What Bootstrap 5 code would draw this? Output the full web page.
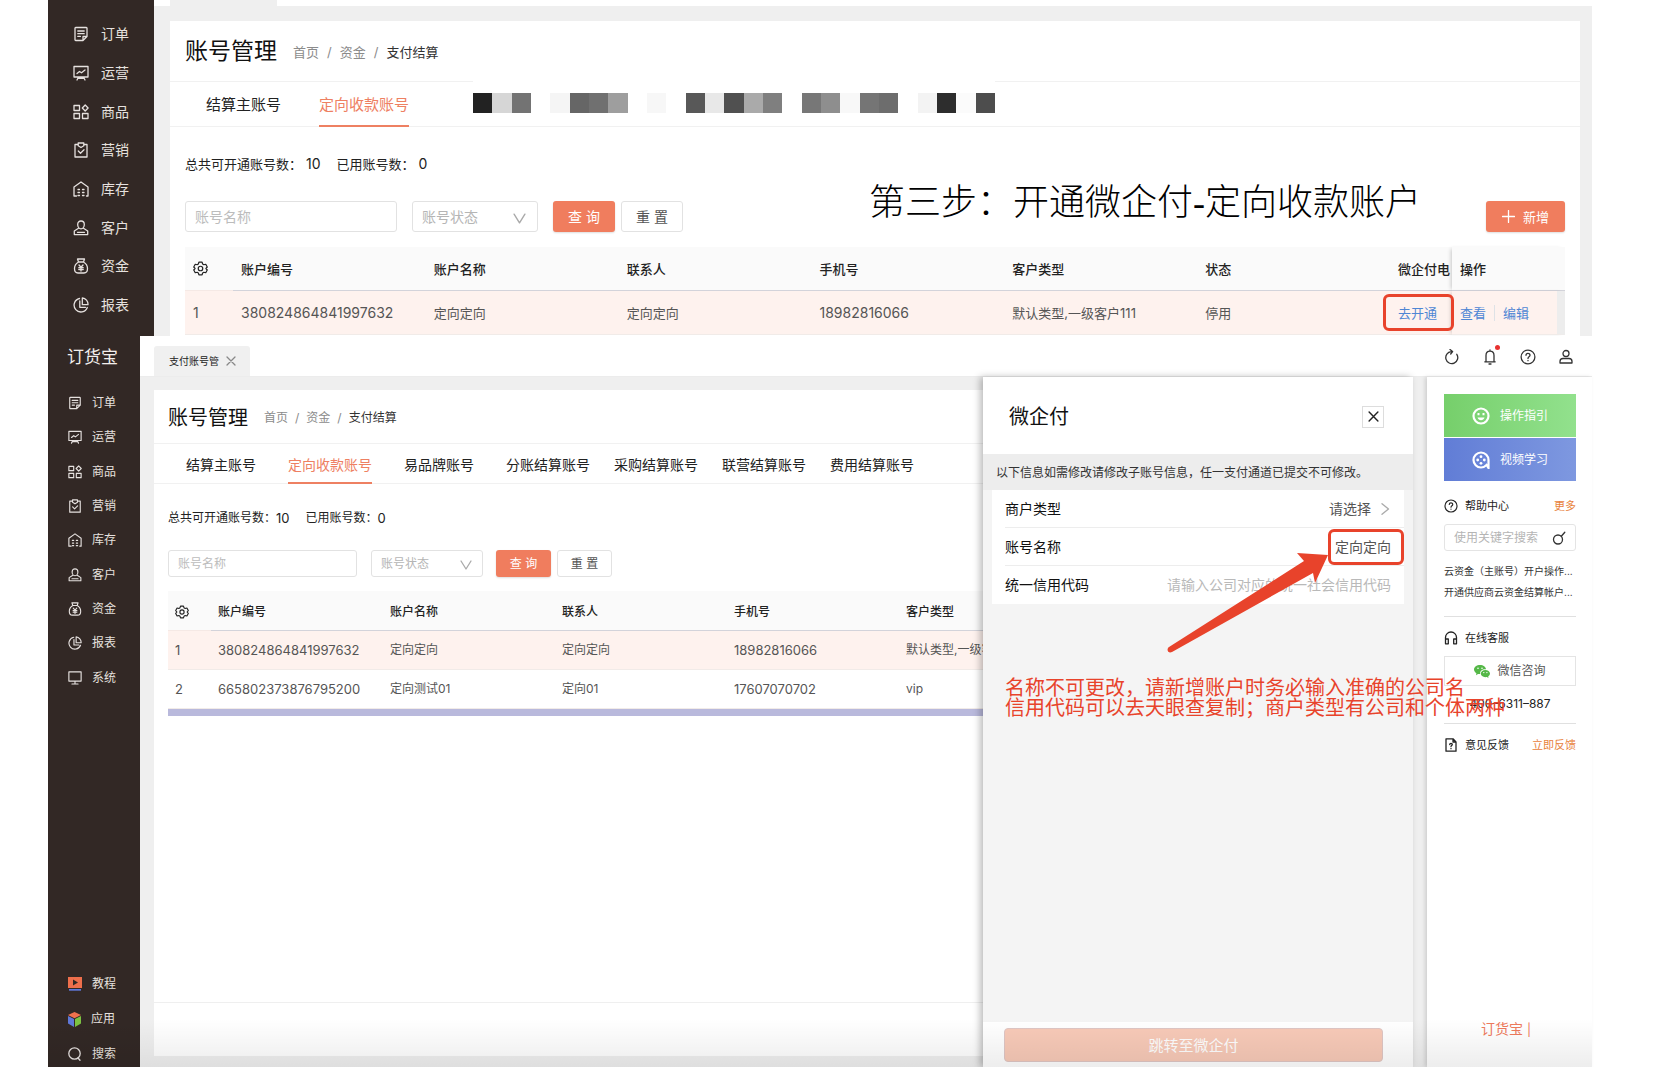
<!DOCTYPE html>
<html lang="zh-CN">
<head>
<meta charset="utf-8">
<meta name="viewport" content="width=device-width, initial-scale=1">
<title>账号管理</title>
<link rel="stylesheet" href="https://cdn.jsdelivr.net/npm/bootstrap@5.3.0/dist/css/bootstrap.min.css">
<style>
body{font-family:Inter,"Noto Sans CJK SC",sans-serif;font-size:12px;line-height:20px;color:#333;background:#fff;overflow:hidden}
a{text-decoration:none}
svg{display:block;flex:none}
.ic{fill:none;stroke:currentColor;stroke-width:1.3;stroke-linecap:round;stroke-linejoin:round}
.doc{padding:0 88px 0 48px;height:100vh}
.shot-a{height:336px;overflow:hidden;font-size:13px}
.shot-b{flex:1 1 0;min-height:0}
.side{background:#322825;flex:none;overflow:hidden}
.shot-a .side{width:106px;padding-top:15px}
.shot-b .side{width:92px}
.side ul{margin:0;padding:0;list-style:none;display:flex;flex-direction:column;flex:none}
.side li{flex:1 1 0;display:flex;align-items:center}
.side a{color:#e6e1df;display:flex;align-items:center}
.shot-a .side ul{height:348px;font-size:14px;padding-left:25px}
.shot-a .side a{gap:12px}
.shot-b .side ul{height:309px;font-size:12px;padding-left:20px}
.shot-b .side a{gap:10px}
.shot-b .side .foot-menu{height:104px;margin:auto 0 -4px}
.brand{height:50px;padding:9px 0 0 19px;font-size:17px;line-height:24px;color:#f2eeec}
.stage{background:#efefef;flex:1 1 0;min-width:0}
.panel{background:#fff;overflow:hidden}
.shot-a .panel{margin:15px 12px 0 16px;height:315px}
.strip{height:6px;background:#fff}
.strip div{width:107px;height:6px;margin-left:16px;background:#efefef}
.head{display:flex;align-items:center;border-bottom:1px solid #f1f1f1;padding-top:2px}
.head h1{margin:0;color:#111;font-weight:400}
.crumbs a,.crumbs i{color:#8b8b8b;font-style:normal}
.shot-a .head{height:61px;padding-left:15px}
.shot-a .head h1{font-size:23px;margin-right:16px}
.shot-a .crumbs{display:flex;gap:8px}
.shot-b .head{height:54px;padding-left:14px}
.shot-b .head h1{font-size:20px;margin-right:16px}
.shot-b .crumbs{display:flex;gap:7px}
.tabbar{display:flex;border-bottom:1px solid #f1f1f1}
.tabbar a{color:#222;white-space:nowrap;display:flex;align-items:center;border-bottom:2px solid transparent;margin-bottom:-1px;padding-top:3px}
.tabbar a.on{color:#ee8062;border-color:#ee8062}
.shot-a .tabbar{height:45px;font-size:15px;padding-left:36px;gap:38px}
.shot-b .tabbar{height:40px;font-size:14px;padding-left:32px;gap:32px}
.shot-b .tabbar .tight{gap:24px}
.mosaic{background:#fff;margin:-4px 0 13px 26px;width:522px;padding:15px 0 0;box-sizing:border-box;display:flex}
.mosaic span{flex:1 1 0;height:20px}
.stats{display:flex;align-items:center;color:#222}
.stats b{font-weight:400}
.shot-a .stats{height:74px;padding-left:15px}
.shot-a .stats b{font-size:14px;margin-left:4px}
.shot-b .stats{height:66px;padding:2px 0 0 14px}
.shot-b .stats b{font-size:13px}
.filters{display:flex}
.filters .form-control,.pick select{font-size:inherit;line-height:20px;border:1px solid #e2e2e2;border-radius:3px;padding:0 9px;color:#333;background:#fff;height:100%}
.filters input::placeholder{color:#bcbcbc}
.pick{position:relative}
.pick select{appearance:none;width:100%;color:#b5b5b5}
.pick svg{position:absolute;top:50%;color:#aaa;margin-top:-4px;pointer-events:none}
.filters .btn,.add{font-size:inherit;line-height:20px;padding:0;border-radius:3px;white-space:pre}
.btn-coral,.btn-coral:hover{background:#f07d5e;color:#fff;border:0;box-shadow:0 1px 2px #0002}
.btn-plain{background:#fff;border:1px solid #e2e2e2;color:#555}
.shot-a .filters{height:31px;margin:0 15px 15px;font-size:14px}
.shot-a .filters .form-control{width:212px;margin-right:15px}
.shot-a .pick{width:126px;margin-right:15px}
.shot-a .pick svg{right:12px}
.shot-a .filters .btn{width:62px;margin-right:6px}
.shot-a .filters .add{width:79px;margin:0 0 0 auto;font-size:13px}
.shot-b .filters{height:27px;margin:0 14px 14px}
.shot-b .filters .form-control{width:189px;margin-right:14px}
.shot-b .pick{width:112px;margin-right:13px}
.shot-b .pick svg{right:11px}
.shot-b .filters .btn{width:55px;margin-right:6px}
.callout-title{font-family:"Liberation Serif","Noto Sans CJK SC",serif;font-weight:300;font-size:36px;line-height:40px;color:#000;white-space:nowrap;margin:-18px auto 0 180px}
.grid-t{table-layout:fixed;border-collapse:separate;border-spacing:0;white-space:nowrap}
.grid-t th{background:#fafafa;color:#222;font-weight:500;border-bottom:1px solid #d3d3da}
.grid-t th:first-child{border-color:#f5e9e5}
.grid-t td{color:#555;border-bottom:1px solid #f1ebe8}
.grid-t .hot td{background:#fef2ee}
.grid-t a{color:#4f86d4}
.shot-a .grid-t{width:calc(100% - 30px);margin-left:15px}
.shot-a .grid-t th,.shot-a .grid-t td{height:44px;padding:0 0 0 8px}
.shot-a .grid-t .num{font-size:14px}
.shot-b .grid-t .num{font-size:13px}
.shot-a .grid-t th:last-child,.shot-a .grid-t td:last-child{box-shadow:-3px 0 4px -2px #0003}
.shot-a .grid-t td:last-child{border-right:8px solid #ededed}
.shot-b .grid-t{width:903px;margin-left:14px}
.shot-b .grid-t th{height:40px;padding:2px 0 0 7px}
.shot-b .grid-t td{height:39px;padding:0 0 0 7px}
.ring-tag{position:relative}
.ring-tag::after{content:"";position:absolute;left:-15px;right:-17px;top:-11px;bottom:-10px;border:3px solid #e8432b;border-radius:6px;z-index:2}
.hbar{height:7px;background:#b9b9dc;margin-left:14px}
.pager{height:54px;border-top:1px solid #efefef;margin-top:auto}
.topbar{height:41px;background:#fff;border-bottom:1px solid #ececec;padding-left:14px;flex:none}
.doc-tab{width:96px;height:30px;background:#f0f0f0;border-radius:3px 3px 0 0;font-size:10px;padding:0 0 0 15px;align-self:flex-end;display:flex;align-items:center;color:#222;gap:3px}
.doc-tab button,.tool{border:0;background:none;padding:0;color:#888}
.tool{color:#333;position:relative}
.tool .dot{position:absolute;width:5px;height:5px;border-radius:50%;background:#e8312f;right:-2px;top:-4px}
.tools{gap:22px;padding:2px 18px 0 0}
.main-b{flex:1 1 0;min-width:0;padding:13px 0 11px 14px}
.drawer{width:430px;flex:none;background:#f4f4f4;position:relative;z-index:3;box-shadow:-3px 0 7px #0004}
.drawer header{height:77px;background:#fff;padding:2px 29px 0 26px}
.drawer h2{font-size:20px;margin:0;font-weight:400;color:#111}
.x-box{width:22px;height:22px;border:1px solid #ddd;background:#fff;padding:0;color:#222;display:flex;align-items:center;justify-content:center}
.note-line{height:36px;background:#ededed;padding:0 13px;line-height:37px;margin:0}
.fields{background:#fff;margin:0 9px;padding-left:13px;position:relative;font-size:14px}
.fields>div{height:38px;display:flex;align-items:center;padding-right:13px;border-bottom:1px solid #ededed}
.fields>div:last-of-type{border:0}
.fields label{color:#111;width:120px;flex:none}
.fields input{border:0;background:none;text-align:right;flex:1;min-width:0;padding:0;color:#555}
.fields input::placeholder{color:#b9b9b9}
.fields button{border:0;background:none;padding:0;color:#555;margin-left:auto;display:flex;align-items:center;gap:8px}
.ring-field{position:absolute;right:0;top:39px;width:76px;height:36px;border:3px solid #e8432b;border-radius:6px}
.arrow{position:absolute;left:183px;top:174px}
.red-note{position:absolute;left:22px;top:301px;margin:0;font-size:20px;line-height:20px;color:#e8432b;white-space:nowrap}
.drawer footer{margin-top:auto;background:#fff;height:45px;padding:6px 30px 6px 21px}
.go{width:100%;height:34px;font-size:15px;line-height:20px;padding:1px 0 0;background:#f8cab8!important;color:#fff!important;border:1px solid #dfc6c4!important;border-radius:4px}
.help{width:165px;flex:none;background:#fff;margin-left:14px;padding:17px 16px 0 17px;box-shadow:-2px 0 4px #0002}
.tile{height:43px;color:#fff;display:flex;align-items:center;justify-content:center;gap:10px}
.tile-g{background:linear-gradient(90deg,#76cf6b,#92e18d);margin-bottom:1px}
.tile-b{background:linear-gradient(90deg,#617dd6,#7e98e0)}
.cap{font-size:11px;display:flex;align-items:center;gap:7px;color:#222;height:20px;margin:11px 0 8px}
.cap-top{margin-top:15px}
.cap a{margin-left:auto;color:#e8823c}
.find{height:27px;border:1px solid #e4e4e4;border-radius:3px;display:flex;align-items:center;padding:0 9px}
.find input{border:0;padding:0;width:90px;flex:1}
.find input::placeholder{color:#b5b5b5}
.faqs{margin:10px 0 13px}
.faq{font-size:10px;color:#333;display:block;white-space:nowrap;height:21px;line-height:21px}
.rule{border-top:1px solid #e0e0e0}
.wx{height:30px;width:100%;border:1px solid #e4e4e4;background:#fff;color:#555;display:flex;align-items:center;justify-content:center;gap:7px;padding:0}
.tel{margin:8px 0 9px;color:#222}
.mini-brand{font-size:14px;color:#ee7a5c;margin:auto auto 27px 37px}
.fade-b{position:absolute;left:48px;right:88px;bottom:0;height:48px;background:linear-gradient(#0000,#00000012);z-index:5;pointer-events:none}
</style>
</head>
<body>
<svg width="0" height="0" class="position-absolute" aria-hidden="true">
<symbol id="order" viewBox="0 0 16 16"><path d="M2 2.200A.7.7 0 0 1 2.700 1.500h10.600a.7.7 0 0 1 .7.7v8.300l-4 4H2.700a.7.7 0 0 1-.7-.7zM14 10.500h-4v4M4.800 5h6.400M4.800 7.700h6.400M4.800 10.400h2.600"/></symbol>
<symbol id="ops" viewBox="0 0 16 16"><path d="M1 1.500h14v10.500h-14zM4 8.500l2.500-2 2 1.300L12 5M5.500 12L4 15M10.500 12l1.500 3M5 13.300h6"/></symbol>
<symbol id="goods" viewBox="0 0 16 16"><path d="M1 1.500h5.500v5H1zM1 9.500h5.500v5H1zM9.500 9.500H15v5H9.500zM12.200 1l2.900 3-2.900 3-2.900-3z"/></symbol>
<symbol id="promo" viewBox="0 0 16 16"><path d="M5 2.500H2v12.500h12V2.500h-3M5.200 1h5.600v2.800L8 5.500 5.200 3.800zM5.300 9l2.200 2.200L11 7.800"/></symbol>
<symbol id="stock" viewBox="0 0 16 16"><path d="M3.500 15H1V6l7-5 7 5v9h-1.500M5 8.500h1.500M5 11.500h1.500M5 14.500h1.500M9.500 8.500H11M9.500 11.500H11M9.500 14.500H11"/></symbol>
<symbol id="client" viewBox="0 0 16 16"><path d="M8 1c2 0 3.300 1.500 3.300 3.500S10 8.800 8 8.800 4.700 6.500 4.700 4.500 6 1 8 1zM5.500 8.300L1.300 11v3.600h13.400V11l-4.200-2.700M4.500 12.300h7"/></symbol>
<symbol id="money" viewBox="0 0 16 16"><path d="M5.500 4L4.500 1h7l-1 3zM5.500 4C3 5.500 1.500 8 1.500 10.500c0 3 1.700 4.500 3.500 4.500h6c1.800 0 3.500-1.500 3.500-4.500C14.500 8 13 5.500 10.500 4M6 7l2 2.300L10 7M8 9.300V13M5.800 9.700h4.400M5.800 11.500h4.400"/></symbol>
<symbol id="report" viewBox="0 0 16 16"><path d="M6.500 1.500A6.800 6.800 0 1 0 14.300 10.500M9.300 1v6.700H15A6.300 6.300 0 0 0 9.300 1zM6.800 4v6.300h5.700"/></symbol>
<symbol id="system" viewBox="0 0 16 16"><path d="M1 1h14v10.500H1zM8 11.500v3M4.500 14.800h7"/></symbol>
<symbol id="gear" viewBox="0 0 16 16"><path d="M6.300 1.300h3.400l.6 1.900 1.300.8 2-.5 1.600 2.900L13.800 8l1.400 1.600-1.600 2.900-2-.5-1.300.8-.6 1.900H6.300l-.6-1.900-1.300-.8-2 .5L.8 9.600 2.200 8 .8 6.400l1.600-2.900 2 .5 1.300-.8z"/><circle cx="8" cy="8" r="2.400"/></symbol>
<symbol id="down" viewBox="0 0 12 10"><path d="M1 1l5 8 5-8"/></symbol>
<symbol id="cross" viewBox="0 0 10 10"><path d="M1 1l8 8M9 1L1 9"/></symbol>
<symbol id="ask" viewBox="0 0 16 16"><circle cx="8" cy="8" r="6.900"/><path d="M6 6.300C6 3.700 10 3.800 10 6.200 10 7.800 8 7.700 8 9.400M8 11.500v.2"/></symbol>
</svg>

<div class="doc d-flex flex-column">
  <section class="shot-a d-flex">
    <nav class="side" aria-label="主菜单">
      <ul>
        <li><a href="#"><svg class="ic" width="16" height="16"><use href="#order"/></svg>订单</a></li>
        <li><a href="#"><svg class="ic" width="16" height="16"><use href="#ops"/></svg>运营</a></li>
        <li><a href="#"><svg class="ic" width="16" height="16"><use href="#goods"/></svg>商品</a></li>
        <li><a href="#"><svg class="ic" width="16" height="16"><use href="#promo"/></svg>营销</a></li>
        <li><a href="#"><svg class="ic" width="16" height="16"><use href="#stock"/></svg>库存</a></li>
        <li><a href="#"><svg class="ic" width="16" height="16"><use href="#client"/></svg>客户</a></li>
        <li><a href="#"><svg class="ic" width="16" height="16"><use href="#money"/></svg>资金</a></li>
        <li><a href="#"><svg class="ic" width="16" height="16"><use href="#report"/></svg>报表</a></li>
        <li><a href="#" aria-label="系统"><svg class="ic" width="16" height="16"><use href="#system"/></svg></a></li>
      </ul>
    </nav>
    <div class="stage">
      <div class="strip"><div></div></div>
      <div class="panel">
        <div class="head"><h1>账号管理</h1><div class="crumbs"><a href="#">首页</a><i>/</i><a href="#">资金</a><i>/</i><span>支付结算</span></div></div>
        <div class="tabbar">
          <a href="#">结算主账号</a><a href="#" class="on">定向收款账号</a>
          <div class="mosaic" aria-hidden="true"></div>
        </div>
        <div class="stats"><span>总共可开通账号数：</span><b>10</b><span class="ms-3">已用账号数：</span><b>0</b></div>
        <div class="filters">
          <input class="form-control" placeholder="账号名称" aria-label="账号名称">
          <div class="pick"><select aria-label="账号状态"><option>账号状态</option></select><svg class="ic" width="13" height="11"><use href="#down"/></svg></div>
          <button class="btn btn-coral" type="button">查 询</button>
          <button class="btn btn-plain" type="button">重 置</button>
          <h2 class="callout-title">第三步：开通微企付-定向收款账户</h2>
          <button class="btn btn-coral add d-flex align-items-center justify-content-center gap-2" type="button"><svg class="ic" width="13" height="13" viewBox="0 0 13 13"><path d="M6.500 .5v12M.5 6.500h12"/></svg>新增</button>
        </div>
        <table class="grid-t">
          <colgroup><col style="width:48px"><col><col><col><col><col><col><col style="width:62px"><col style="width:113px"></colgroup>
          <thead><tr><th><svg class="ic" width="15" height="15"><use href="#gear"/></svg></th><th>账户编号</th><th>账户名称</th><th>联系人</th><th>手机号</th><th>客户类型</th><th>状态</th><th>微企付电</th><th>操作</th></tr></thead>
          <tbody><tr class="hot"><td class="num">1</td><td class="num">380824864841997632</td><td>定向定向</td><td>定向定向</td><td class="num">18982816066</td><td>默认类型,一级客户111</td><td>停用</td><td><a href="#" class="ring-tag">去开通</a></td><td><a href="#">查看</a><span class="border-start mx-2"></span><a href="#">编辑</a></td></tr></tbody>
        </table>
      </div>
    </div>
  </section>

  <section class="shot-b d-flex">
    <nav class="side d-flex flex-column" aria-label="侧栏">
      <div class="brand">订货宝</div>
      <ul>
        <li><a href="#"><svg class="ic" width="14" height="14"><use href="#order"/></svg>订单</a></li>
        <li><a href="#"><svg class="ic" width="14" height="14"><use href="#ops"/></svg>运营</a></li>
        <li><a href="#"><svg class="ic" width="14" height="14"><use href="#goods"/></svg>商品</a></li>
        <li><a href="#"><svg class="ic" width="14" height="14"><use href="#promo"/></svg>营销</a></li>
        <li><a href="#"><svg class="ic" width="14" height="14"><use href="#stock"/></svg>库存</a></li>
        <li><a href="#"><svg class="ic" width="14" height="14"><use href="#client"/></svg>客户</a></li>
        <li><a href="#"><svg class="ic" width="14" height="14"><use href="#money"/></svg>资金</a></li>
        <li><a href="#"><svg class="ic" width="14" height="14"><use href="#report"/></svg>报表</a></li>
        <li><a href="#"><svg class="ic" width="14" height="14"><use href="#system"/></svg>系统</a></li>
      </ul>
      <ul class="foot-menu">
        <li><a href="#"><svg width="14" height="14" viewBox="0 0 14 14"><path fill="#ee6f4c" d="M0 0h14v11H0z"/><path fill="#322825" d="M5 2.500l5 3-5 3z"/><path fill="#5f78d8" d="M1 12h12v1.700H1z"/></svg>教程</a></li>
        <li><a href="#"><svg width="13" height="15" viewBox="0 0 13 15"><path fill="#f0714e" d="M6.500 0L13 3 6.500 6.300 0 3z"/><path fill="#5f78d8" d="M0 4l6 3v8l-6-3.500z"/><path fill="#7cc242" d="M13 4L7 7v8l6-3.500z"/></svg>应用</a></li>
        <li><a href="#"><svg class="ic" width="14" height="14" viewBox="0 0 14 14"><circle cx="6.500" cy="6.500" r="5.700"/><path d="M10 11l2 2.300"/></svg>搜索</a></li>
      </ul>
    </nav>
    <div class="stage d-flex flex-column">
      <div class="topbar d-flex">
        <div class="doc-tab"><span>支付账号管</span><button type="button" class="ms-1" aria-label="关闭标签"><svg class="ic" width="10" height="10"><use href="#cross"/></svg></button></div>
        <div class="tools d-flex align-items-center ms-auto">
          <button class="tool" type="button" aria-label="刷新"><svg class="ic" width="16" height="16" viewBox="0 0 16 16"><path d="M12.800 5.300A6 6 0 1 1 7.200 2.600M6 .6l2.600 2L6.700 5"/></svg></button>
          <button class="tool" type="button" aria-label="通知"><svg class="ic" width="16" height="16" viewBox="0 0 16 16"><path d="M4 12.700V6.500C4 4 5.600 2.200 8 2.200s4 1.800 4 4.300v6.200M2.800 12.800h10.400M7 15h2M8 1v1"/></svg><span class="dot"></span></button>
          <button class="tool" type="button" aria-label="帮助"><svg class="ic" width="16" height="16"><use href="#ask"/></svg></button>
          <button class="tool" type="button" aria-label="用户"><svg class="ic" width="16" height="16" viewBox="0 0 16 16"><circle cx="8" cy="4.500" r="3"/><path d="M2 14v-1.500c0-2 1.500-3 3-3h6c1.500 0 3 1 3 3V14z"/></svg></button>
        </div>
      </div>
      <div class="d-flex flex-fill" style="min-height:0">
        <main class="main-b d-flex">
          <div class="panel d-flex flex-column w-100">
            <div class="head flex-shrink-0"><h1>账号管理</h1><div class="crumbs"><a href="#">首页</a><i>/</i><a href="#">资金</a><i>/</i><span>支付结算</span></div></div>
            <div class="tabbar flex-shrink-0"><a href="#">结算主账号</a><a href="#" class="on">定向收款账号</a><a href="#">易品牌账号</a><div class="d-flex tight"><a href="#">分账结算账号</a><a href="#">采购结算账号</a><a href="#">联营结算账号</a><a href="#">费用结算账号</a></div></div>
            <div class="stats flex-shrink-0"><span>总共可开通账号数：</span><b>10</b><span class="ms-3">已用账号数：</span><b>0</b></div>
            <div class="filters flex-shrink-0">
              <input class="form-control" placeholder="账号名称" aria-label="账号名称">
              <div class="pick"><select aria-label="账号状态"><option>账号状态</option></select><svg class="ic" width="12" height="10"><use href="#down"/></svg></div>
              <button class="btn btn-coral" type="button">查 询</button>
              <button class="btn btn-plain" type="button">重 置</button>
            </div>
            <table class="grid-t flex-shrink-0">
              <colgroup><col style="width:43px"><col><col><col><col><col></colgroup>
              <thead><tr><th><svg class="ic" width="14" height="14"><use href="#gear"/></svg></th><th>账户编号</th><th>账户名称</th><th>联系人</th><th>手机号</th><th>客户类型</th></tr></thead>
              <tbody>
                <tr class="hot"><td class="num">1</td><td class="num">380824864841997632</td><td>定向定向</td><td>定向定向</td><td class="num">18982816066</td><td>默认类型,一级客户111</td></tr>
                <tr><td class="num">2</td><td class="num">665802373876795200</td><td>定向测试01</td><td>定向01</td><td class="num">17607070702</td><td>vip</td></tr>
              </tbody>
            </table>
            <div class="hbar flex-shrink-0"></div>
            <div class="pager flex-shrink-0"></div>
          </div>
        </main>

        <aside class="drawer d-flex flex-column">
          <header class="d-flex align-items-center justify-content-between"><h2>微企付</h2><button class="x-box" type="button" aria-label="关闭"><svg class="ic" width="11" height="11"><use href="#cross"/></svg></button></header>
          <p class="note-line">以下信息如需修改请修改子账号信息，任一支付通道已提交不可修改。</p>
          <div class="fields">
            <div><label for="f1">商户类型</label><button id="f1" type="button">请选择<svg class="ic" width="12" height="12" viewBox="0 0 12 12" stroke-opacity=".5"><path d="M3 .7L9.500 6 3 11.300"/></svg></button></div>
            <div><label for="f2">账号名称</label><input id="f2" value="定向定向" readonly></div>
            <div><label for="f3">统一信用代码</label><input id="f3" placeholder="请输入公司对应的统一社会信用代码"></div>
            <span class="ring-field"></span>
          </div>
          <svg class="arrow" width="164" height="102" viewBox="0 0 164 102" aria-hidden="true"><path fill="#e8432b" d="M162 4L131 2l7 8L3 96c-3 2-1 7 3 5L147 22l2 10z"/></svg>
          <p class="red-note">名称不可更改，请新增账户时务必输入准确的公司名<br>信用代码可以去天眼查复制；商户类型有公司和个体两种</p>
          <footer><button class="btn go" type="button">跳转至微企付</button></footer>
        </aside>

        <aside class="help d-flex flex-column">
          <a href="#" class="tile tile-g"><svg width="18" height="18" viewBox="0 0 18 18" fill="none" stroke="#fff" stroke-width="2.200"><circle cx="9" cy="9" r="7.500"/><path d="M5.500 10.500c1 3.500 6 3.500 7 0z" fill="#fff" stroke-width="0"/><path d="M5.500 7.200h2M10.500 7.200h2"/></svg>操作指引</a>
          <a href="#" class="tile tile-b"><svg width="18" height="18" viewBox="0 0 18 18"><path fill="none" stroke="#fff" stroke-width="2.200" d="M16.500 17V9A7.500 7.500 0 1 0 9 16.500c2.500 0 4-1 5.500-2.500l2 3z"/><g fill="#fff"><circle cx="9" cy="5.700" r="1.400"/><circle cx="9" cy="12.300" r="1.400"/><circle cx="5.700" cy="9" r="1.400"/><circle cx="12.300" cy="9" r="1.400"/></g></svg>视频学习</a>
          <div class="cap cap-top"><svg class="ic" width="14" height="14"><use href="#ask"/></svg>帮助中心<a href="#">更多</a></div>
          <div class="find"><input placeholder="使用关键字搜索" aria-label="使用关键字搜索"><svg class="ic" width="14" height="14" viewBox="0 0 14 14"><circle cx="6" cy="8.500" r="4.500"/><path d="M9.300 5.300l3.500-4"/></svg></div>
          <div class="faqs"><a href="#" class="faq">云资金（主账号）开户操作...</a><a href="#" class="faq">开通供应商云资金结算帐户...</a></div>
          <div class="rule"></div>
          <div class="cap"><svg class="ic" width="14" height="14" viewBox="0 0 14 14"><path d="M1.500 8.500V6.500a5.500 5.500 0 0 1 11 0v2M1.500 8h2.800v4.800H1.500zM9.700 8h2.800v4.800H9.700z"/></svg>在线客服</div>
          <button class="wx" type="button"><svg width="16" height="13" viewBox="0 0 16 13"><path fill="#55b848" d="M6 0c3.300 0 6 2 6 4.300C8.500 4 5.600 6 6.200 9L4 9 2 10.200 2.400 8.200C1 7.400 0 6 0 4.500 0 2 2.700 0 6 0z"/><path fill="#55b848" d="M11.300 5c2.600 0 4.700 1.600 4.700 3.600 0 1.200-.8 2.200-1.800 2.900l.3 1.500-1.700-1c-3.300.7-6-1-6-3.400C6.800 6.600 8.800 5 11.300 5z"/><g fill="#fff"><circle cx="4" cy="3.300" r=".8"/><circle cx="8" cy="3.300" r=".8"/><circle cx="9.800" cy="7.600" r=".7"/><circle cx="12.900" cy="7.600" r=".7"/></g></svg>微信咨询</button>
          <div class="tel text-center">400–6311–887</div>
          <div class="rule"></div>
          <div class="cap"><svg class="ic" width="14" height="14" viewBox="0 0 14 14"><path d="M2 .8h7L12 4v9.200H2zM9 .8V4h3M5.700 6.500c0-1.500 2.600-1.500 2.600 0 0 1-1.300 1-1.300 2M7 10.500v.2"/></svg>意见反馈<a href="#">立即反馈</a></div>
          <div class="mini-brand">订货宝<small class="ms-1">|</small></div>
        </aside>
      </div>
    </div>
  </section>
</div>
<div class="fade-b"></div>
<script src="https://cdn.jsdelivr.net/npm/bootstrap@5.3.0/dist/js/bootstrap.bundle.min.js"></script>
<script>
// Redacted tab names: one grey level per tile
const tones=['#222','#d6d6d6','#737373','#fff','#f5f5f5','#666','#707070','#9e9e9e','#fff','#f7f7f7','#fff','#585858','#e8e8e8','#505050','#aaa','#7f7f7f','#fff','#777','#8e8e8e','#f8f8f8','#757575','#6d6d6d','#fff','#f3f3f3','#2d2d2d','#fbfbfb','#4d4d4d'];
document.querySelector('.mosaic').innerHTML=tones.map(t=>`<span style="background:${t}"></span>`).join('');
</script>
</body>
</html>
